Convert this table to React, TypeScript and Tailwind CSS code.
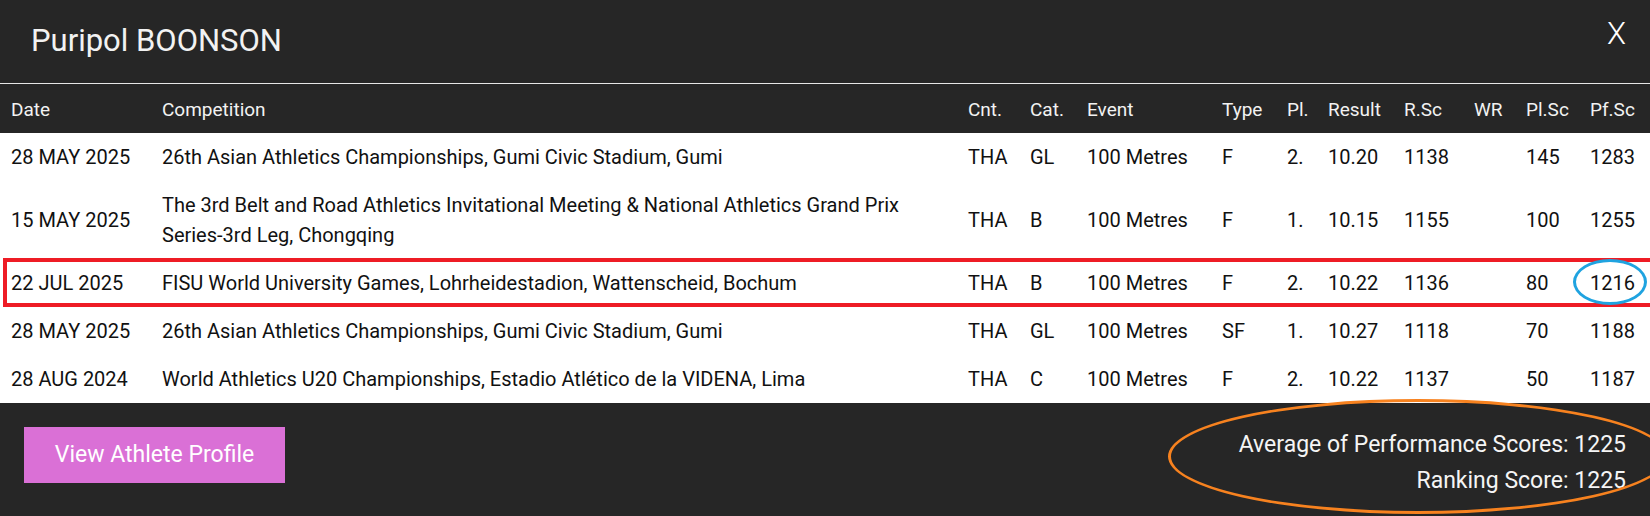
const rows = [
  { date: '28 MAY 2025', comp: '26th Asian Athletics Championships, Gumi Civic Stadium, Gumi', cnt: 'THA', cat: 'GL', event: '100 Metres', type: 'F', pl: '2.', result: '10.20', rsc: '1138', wr: '', plsc: '145', pfsc: '1283' },
  { date: '15 MAY 2025', comp: 'The 3rd Belt and Road Athletics Invitational Meeting & National Athletics Grand Prix Series-3rd Leg, Chongqing', cnt: 'THA', cat: 'B', event: '100 Metres', type: 'F', pl: '1.', result: '10.15', rsc: '1155', wr: '', plsc: '100', pfsc: '1255' },
  { date: '22 JUL 2025', comp: 'FISU World University Games, Lohrheidestadion, Wattenscheid, Bochum', cnt: 'THA', cat: 'B', event: '100 Metres', type: 'F', pl: '2.', result: '10.22', rsc: '1136', wr: '', plsc: '80', pfsc: '1216' },
  { date: '28 MAY 2025', comp: '26th Asian Athletics Championships, Gumi Civic Stadium, Gumi', cnt: 'THA', cat: 'GL', event: '100 Metres', type: 'SF', pl: '1.', result: '10.27', rsc: '1118', wr: '', plsc: '70', pfsc: '1188' },
  { date: '28 AUG 2024', comp: 'World Athletics U20 Championships, Estadio Atlético de la VIDENA, Lima', cnt: 'THA', cat: 'C', event: '100 Metres', type: 'F', pl: '2.', result: '10.22', rsc: '1137', wr: '', plsc: '50', pfsc: '1187' },
];

const headers = ['Date', 'Competition', 'Cnt.', 'Cat.', 'Event', 'Type', 'Pl.', 'Result', 'R.Sc', 'WR', 'Pl.Sc', 'Pf.Sc'];

export default function App() {
  return (
    <div className="relative h-[516px] w-[1650px] overflow-hidden bg-[#262626] font-['Roboto',sans-serif]">
      {/* Title bar */}
      <div className="flex h-[84px] items-center justify-between border-b border-[#e6e6e6] pl-[31px] pr-[24px]">
        <h1 className="text-[31px] text-[#f2f2f2]">Puripol BOONSON</h1>
        <button className="mb-[14px] text-[31px] font-light text-white">X</button>
      </div>

      {/* Results table */}
      <table className="w-full table-fixed border-collapse">
        <colgroup>
          <col className="w-[152px]" />
          <col className="w-[806px]" />
          <col className="w-[62px]" />
          <col className="w-[57px]" />
          <col className="w-[135px]" />
          <col className="w-[65px]" />
          <col className="w-[41px]" />
          <col className="w-[76px]" />
          <col className="w-[70px]" />
          <col className="w-[52px]" />
          <col className="w-[64px]" />
          <col className="w-[70px]" />
        </colgroup>
        <thead>
          <tr className="h-[49px] text-[19px] text-[#f2f2f2]">
            {headers.map((h, i) => (
              <th key={h} className={`whitespace-nowrap pt-[4px] text-left font-normal ${i === 0 ? 'pl-[11px]' : 'pl-[10px]'}`}>
                {h}
              </th>
            ))}
          </tr>
        </thead>
        <tbody className="bg-white text-[20px] text-[#111111]">
          {rows.map((r, idx) => (
            <tr key={idx} className="leading-[30px]">
              <td className="whitespace-nowrap py-[9px] pl-[11px]">{r.date}</td>
              <td className="py-[9px] pl-[10px] pr-[30px]">{r.comp}</td>
              <td className="py-[9px] pl-[10px]">{r.cnt}</td>
              <td className="py-[9px] pl-[10px]">{r.cat}</td>
              <td className="whitespace-nowrap py-[9px] pl-[10px]">{r.event}</td>
              <td className="py-[9px] pl-[10px]">{r.type}</td>
              <td className="py-[9px] pl-[10px]">{r.pl}</td>
              <td className="py-[9px] pl-[10px]">{r.result}</td>
              <td className="py-[9px] pl-[10px]">{r.rsc}</td>
              <td className="py-[9px] pl-[10px]">{r.wr}</td>
              <td className="py-[9px] pl-[10px]">{r.plsc}</td>
              <td className="py-[9px] pl-[10px]">{r.pfsc}</td>
            </tr>
          ))}
        </tbody>
      </table>

      {/* Footer */}
      <div className="flex items-start justify-between px-[24px] pt-[24px]">
        <button className="h-[56px] w-[261px] bg-[#da70d6] text-[23px] text-white">View Athlete Profile</button>
        <div className="text-right text-[23px] leading-[36px] text-[#f5f5f5]">
          <p>Average of Performance Scores: 1225</p>
          <p>Ranking Score: 1225</p>
        </div>
      </div>

      {/* Annotations */}
      <div className="pointer-events-none absolute left-[3px] top-[258px] h-[49px] w-[1660px] border-[4px] border-[#ee1c25]" />
      <div className="pointer-events-none absolute left-[1573px] top-[259px] h-[46px] w-[74px] rounded-[50%] border-[3px] border-[#1fa3e0]" />
      <div className="pointer-events-none absolute left-[1168px] top-[399px] h-[115px] w-[500px] rounded-[50%] border-[3px] border-[#f7821f]" />
    </div>
  );
}
